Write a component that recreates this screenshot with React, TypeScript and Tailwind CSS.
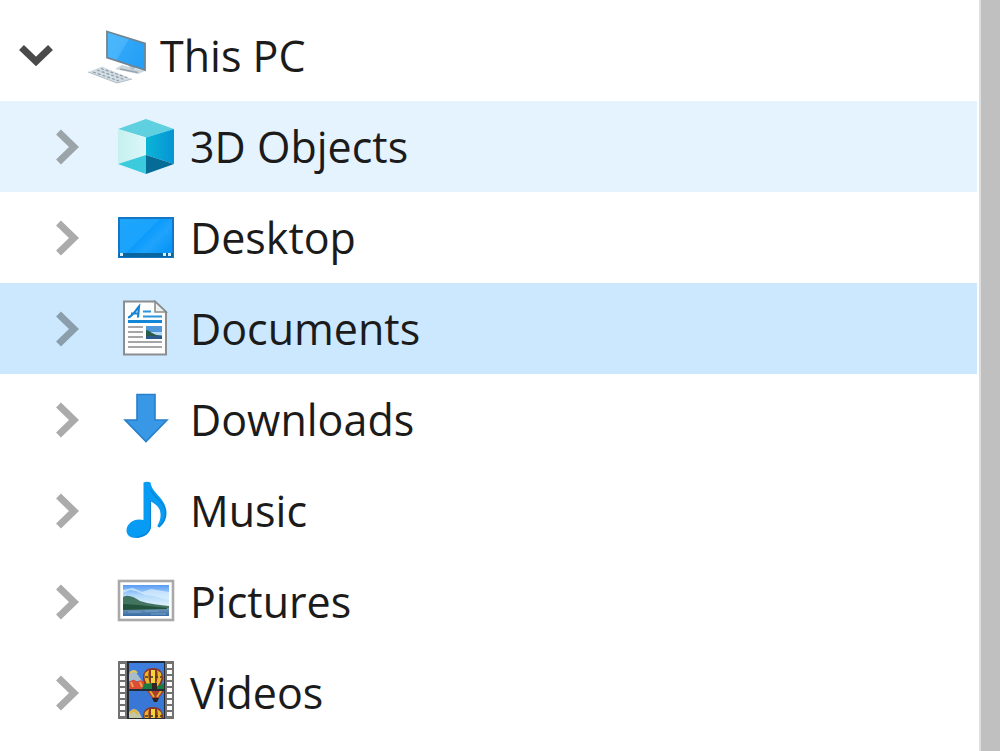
import { useState, type ReactNode } from "react";
import clsx from "clsx";

function ComputerIcon() {
  return (
    <svg viewBox="0 0 60 60" className="size-15 shrink-0 overflow-visible" aria-hidden>
      <defs>
        <linearGradient id="pc-screen" x1="0" y1="0" x2="1" y2="0.6">
          <stop offset="0" stopColor="#4db8fc" />
          <stop offset="0.5" stopColor="#45b3fb" />
          <stop offset="0.52" stopColor="#2fa6f8" />
          <stop offset="1" stopColor="#25a0f6" />
        </linearGradient>
      </defs>
      <path d="M29 43L36 39L59 45L52 48Z" fill="#ccd6dd" />
      <path d="M34 43L52 46.500" stroke="#98a5ae" strokeWidth="1.500" />
      <path d="M44 38L48 43" stroke="#b6c1c9" strokeWidth="4" />
      <path d="M21 5.500L59 17.500V44L21 31.500Z" fill="url(#pc-screen)" stroke="#6e8493" strokeWidth="1.800" />
      <path d="M2 46L16 40.500L46 53L31 57Z" fill="#d3dde4" />
      <path d="M7 46L33 55M11 44L38 53.500M15 42.500L42 52" stroke="#8e9ca7" strokeWidth="1.200" strokeDasharray="3 2" />
      <path d="M2 46L31 57L46 53" fill="none" stroke="#b3bfc8" strokeWidth="1" />
    </svg>
  );
}

function CubeIcon() {
  return (
    <svg viewBox="0 0 60 60" className="size-15 shrink-0" aria-hidden>
      <defs>
        <linearGradient id="cube-left" x1="0" y1="0" x2="1" y2="0">
          <stop offset="0" stopColor="#c5f1ed" />
          <stop offset="1" stopColor="#dcf6f9" />
        </linearGradient>
        <linearGradient id="cube-right" x1="0" y1="0" x2="1" y2="0">
          <stop offset="0" stopColor="#0bb5d5" />
          <stop offset="1" stopColor="#0594d6" />
        </linearGradient>
      </defs>
      <path d="M30 2L58 12L30 20.500L2 12Z" fill="#5fd0e0" />
      <path d="M2 12L30 20.500V38L2 47Z" fill="url(#cube-left)" />
      <path d="M58 12L30 20.500V38L58 47Z" fill="url(#cube-right)" />
      <path d="M2 47L30 38V57Z" fill="#3ccbdc" />
      <path d="M58 47L30 38V57Z" fill="#056c97" />
    </svg>
  );
}

function DesktopIcon() {
  return (
    <svg viewBox="0 0 60 60" className="size-15 shrink-0" aria-hidden>
      <defs>
        <linearGradient id="desktop-fill" x1="0" y1="0" x2="1" y2="0.730">
          <stop offset="0" stopColor="#1fa6fc" />
          <stop offset="0.500" stopColor="#1aa3fd" />
          <stop offset="0.520" stopColor="#0b9bfc" />
          <stop offset="0.720" stopColor="#1fa3fd" />
          <stop offset="1" stopColor="#0795f7" />
        </linearGradient>
      </defs>
      <rect x="3" y="10" width="54" height="39" fill="url(#desktop-fill)" stroke="#1377c5" strokeWidth="2" />
      <rect x="3" y="45" width="54" height="4" fill="#08659f" />
      <rect x="4" y="45" width="3" height="3" fill="#d5eeff" />
      <rect x="47" y="45" width="3" height="3" fill="#d5eeff" />
      <rect x="52" y="45" width="3" height="3" fill="#d5eeff" />
    </svg>
  );
}

function DocumentIcon() {
  return (
    <svg viewBox="0 0 60 60" className="size-15 shrink-0" aria-hidden>
      <path d="M8 2.500H39L50 13V55.500H8Z" fill="#fdfdfd" stroke="#8b8d8f" strokeWidth="2" />
      <path d="M39 2.500V13H50Z" fill="#eef0f1" stroke="#8b8d8f" strokeWidth="1.600" />
      <path d="M12 18.500C16 18 20 11 23 7.500L22 18.500M15 14.500H23" fill="none" stroke="#1784d4" strokeWidth="2.200" />
      <path d="M27 12.500H35M27 17.500H46" stroke="#2c94dc" strokeWidth="2.200" />
      <path d="M12 22.500H46" stroke="#1486d7" strokeWidth="3" />
      <path d="M12 28H27M12 33H27M12 38H27M12 43H46M12 48H46" stroke="#a6a6a6" strokeWidth="1.800" />
      <rect x="30" y="27" width="16" height="13" fill="#4f98dc" />
      <path d="M30 31L34 33H46V36H30Z" fill="#b8daf0" />
      <path d="M30 31C34 31 36 36 46 37V38H30Z" fill="#2b5c4b" />
      <path d="M30 37H46V40H30Z" fill="#2c598c" />
    </svg>
  );
}

function DownloadIcon() {
  return (
    <svg viewBox="0 0 60 60" className="size-15 shrink-0" aria-hidden>
      <path d="M21 4.500H39V30H51L30 51.500L9 30H21Z" fill="#3898e5" stroke="#287fca" strokeWidth="1.600" />
    </svg>
  );
}

function MusicIcon() {
  return (
    <svg viewBox="0 0 60 60" className="size-15 shrink-0" aria-hidden>
      <path
        d="M27.500 1.500Q31 0 34.500 1.500C36 13 50.500 17 50.500 32C50.500 38 48 43 43.500 46.500Q41 46.500 41.500 44.500C45 39 46 31 42 26C40 23.500 37 21.500 35 20.500V45C35 52 28 57 20 57C14 57 10.500 54 10.500 49.500C10.500 43 17 38.500 23 38.500Q26 38.500 27.500 39Z"
        fill="#079bf3"
      />
      <path
        d="M35 9C38 17 49.500 21 49.500 32C49.500 38 47 42 43 45.500M34.500 20V45C34 51 28 56 20 56"
        fill="none"
        stroke="#0a83d6"
        strokeWidth="1.200"
      />
    </svg>
  );
}

function PictureIcon() {
  return (
    <svg viewBox="0 0 60 60" className="size-15 shrink-0" aria-hidden>
      <defs>
        <linearGradient id="picture-sky" x1="0" y1="0" x2="0" y2="1">
          <stop offset="0" stopColor="#579bf3" />
          <stop offset="0.350" stopColor="#b4dbfb" />
          <stop offset="0.700" stopColor="#e5f4fb" />
        </linearGradient>
        <linearGradient id="picture-sea" x1="0" y1="0" x2="0" y2="1">
          <stop offset="0" stopColor="#7ba0b5" />
          <stop offset="1" stopColor="#386ba7" />
        </linearGradient>
      </defs>
      <rect x="3" y="9" width="54" height="39" fill="#fff" stroke="#a9a9a9" strokeWidth="2.600" />
      <rect x="7" y="13" width="46" height="31" fill="url(#picture-sky)" />
      <path d="M7 21L14 18L20 19L29 23L37 24L53 28V20L35 17L26 20L17 16L7 18Z" fill="#dceffd" opacity="0.700" />
      <rect x="7" y="35" width="46" height="9" fill="url(#picture-sea)" />
      <path d="M7 25C12 22 18 25 24 29C33 32 44 33 53 34V36H7Z" fill="#43745f" />
      <path d="M7 32L22 33L42 35L51 36V37L7 38Z" fill="#24533d" />
      <path d="M12 40H25M29 39H43M35 42H50" stroke="#75a3d0" strokeWidth="1" />
    </svg>
  );
}

function Balloon() {
  return (
    <g>
      <path d="M27 11C27 4 31 1 37 1S47 4 47 11C47 18 41 23 39 25H35C33 23 27 18 27 11Z" fill="#8c3527" />
      <path d="M29 6Q27 13 33 20L35 19Q31 11 33 3ZM45 6Q47 13 41 20L39 19Q43 11 41 3Z" fill="#e9b72b" />
      <path d="M35 3H39V20H35Z" fill="#f2d43b" />
      <path d="M29 10H46" stroke="#463725" strokeWidth="1.400" strokeDasharray="3 2" />
    </g>
  );
}

const FILM_HOLES = [1, 7, 13, 19, 25, 31, 37, 43, 49];

function VideoIcon() {
  return (
    <svg viewBox="0 0 60 60" className="size-15 shrink-0 overflow-visible" aria-hidden>
      <defs>
        <clipPath id="film-top">
          <rect x="13" y="0" width="35" height="26" />
        </clipPath>
        <clipPath id="film-bottom">
          <rect x="13" y="28" width="35" height="27" />
        </clipPath>
      </defs>
      <rect x="2" y="-2" width="56" height="58" fill="#727272" />
      <rect x="11" y="-2" width="38" height="58" fill="#252b35" />
      {FILM_HOLES.map((y) => (
        <g key={y} fill="#fafafa">
          <rect x="4" y={y} width="5" height="4" />
          <rect x="51" y={y} width="5" height="4" />
        </g>
      ))}
      <g clipPath="url(#film-top)">
        <rect x="13" y="0" width="35" height="26" fill="#3d7ddd" />
        <path d="M13 11Q18 6 22 12L26 18H13Z" fill="#a8bcc9" />
        <path d="M14 10Q18 6 21 10" stroke="#e5c657" strokeWidth="2" fill="none" />
        <path d="M13 20Q17 14 21 19Q25 15 29 20V26H13Z" fill="#dc4d38" />
        <path d="M15 19L17 24M24 19L26 24" stroke="#f0a74c" strokeWidth="2" />
        <g transform="translate(0 4)">
          <Balloon />
        </g>
        <path d="M28 21L36 20L38 25L48 20V26H26Z" fill="#187d43" />
        <path d="M36 20H41V26H36Z" fill="#30251f" />
      </g>
      <g clipPath="url(#film-bottom)">
        <rect x="13" y="28" width="35" height="27" fill="#3977d7" />
        <path d="M31 28H48L42 36H37Z" fill="#ac3d2d" />
        <path d="M34 28L38 34M45 28L41 34" stroke="#e0ae2e" strokeWidth="2" />
        <path d="M36 35H43L41 39H38Z" fill="#29221e" />
        <path d="M13 49Q18 43 23 49L26 55H13Z" fill="#c5c6a4" />
        <path d="M14 50L18 47L22 51" fill="none" stroke="#e2b539" strokeWidth="2" />
        <g transform="translate(0 43)">
          <Balloon />
        </g>
      </g>
    </svg>
  );
}

type Folder = {
  id: string;
  label: string;
  icon: ReactNode;
};

const FOLDERS: Folder[] = [
  { id: "objects", label: "3D Objects", icon: <CubeIcon /> },
  { id: "desktop", label: "Desktop", icon: <DesktopIcon /> },
  { id: "documents", label: "Documents", icon: <DocumentIcon /> },
  { id: "downloads", label: "Downloads", icon: <DownloadIcon /> },
  { id: "music", label: "Music", icon: <MusicIcon /> },
  { id: "pictures", label: "Pictures", icon: <PictureIcon /> },
  { id: "videos", label: "Videos", icon: <VideoIcon /> },
];

export default function App() {
  const [open, setOpen] = useState(true);
  const [selected, setSelected] = useState("documents");
  const [hovered, setHovered] = useState("objects");

  return (
    <div className="flex min-h-screen bg-white font-['Open_Sans','Noto_Sans',sans-serif] text-[43px] leading-[60px] text-[#1b1b1b]">
      <nav aria-label="Folders" className="min-w-0 flex-1 pt-[10px] pr-[2px]">
        <div className="flex h-[91px] items-center pl-[18px]">
          <button
            type="button"
            aria-label="Toggle This PC"
            aria-expanded={open}
            onClick={() => setOpen(!open)}
            className="mr-8 shrink-0"
          >
            <svg viewBox="0 0 36 36" className={clsx("size-9", !open && "-rotate-90")} aria-hidden>
              <path d="M3.500 9.500L18 23.500L32.500 9.500" fill="none" stroke="#4a4a4a" strokeWidth="7" />
            </svg>
          </button>
          <button type="button" className="flex min-w-0 flex-1 items-center gap-[14px] text-left">
            <ComputerIcon />
            <span>This PC</span>
          </button>
        </div>
        {open && (
          <ul>
            {FOLDERS.map((folder) => (
              <li
                key={folder.id}
                onMouseEnter={() => setHovered(folder.id)}
                className={clsx(
                  "flex h-[91px] items-center pl-[50px]",
                  folder.id === selected
                    ? "bg-[#cce8ff]"
                    : folder.id === hovered && "bg-[#e5f3ff]",
                )}
              >
                <button type="button" aria-label={`Expand ${folder.label}`} className="mr-[30px] shrink-0">
                  <svg viewBox="0 0 36 36" className="size-9" aria-hidden>
                    <path
                      d="M8.500 3L24 18L8.500 33"
                      fill="none"
                      stroke={
                        folder.id === selected ? "#8b9eab" : folder.id === hovered ? "#9ba5a9" : "#ababab"
                      }
                      strokeWidth="7"
                    />
                  </svg>
                </button>
                <button
                  type="button"
                  onClick={() => setSelected(folder.id)}
                  className="flex min-w-0 flex-1 items-center gap-[14px] text-left"
                >
                  {folder.icon}
                  <span>{folder.label}</span>
                </button>
              </li>
            ))}
          </ul>
        )}
      </nav>
      <div className="w-[21px] shrink-0 border-l-2 border-[#dedede] bg-[#c0c0c0]" />
    </div>
  );
}
